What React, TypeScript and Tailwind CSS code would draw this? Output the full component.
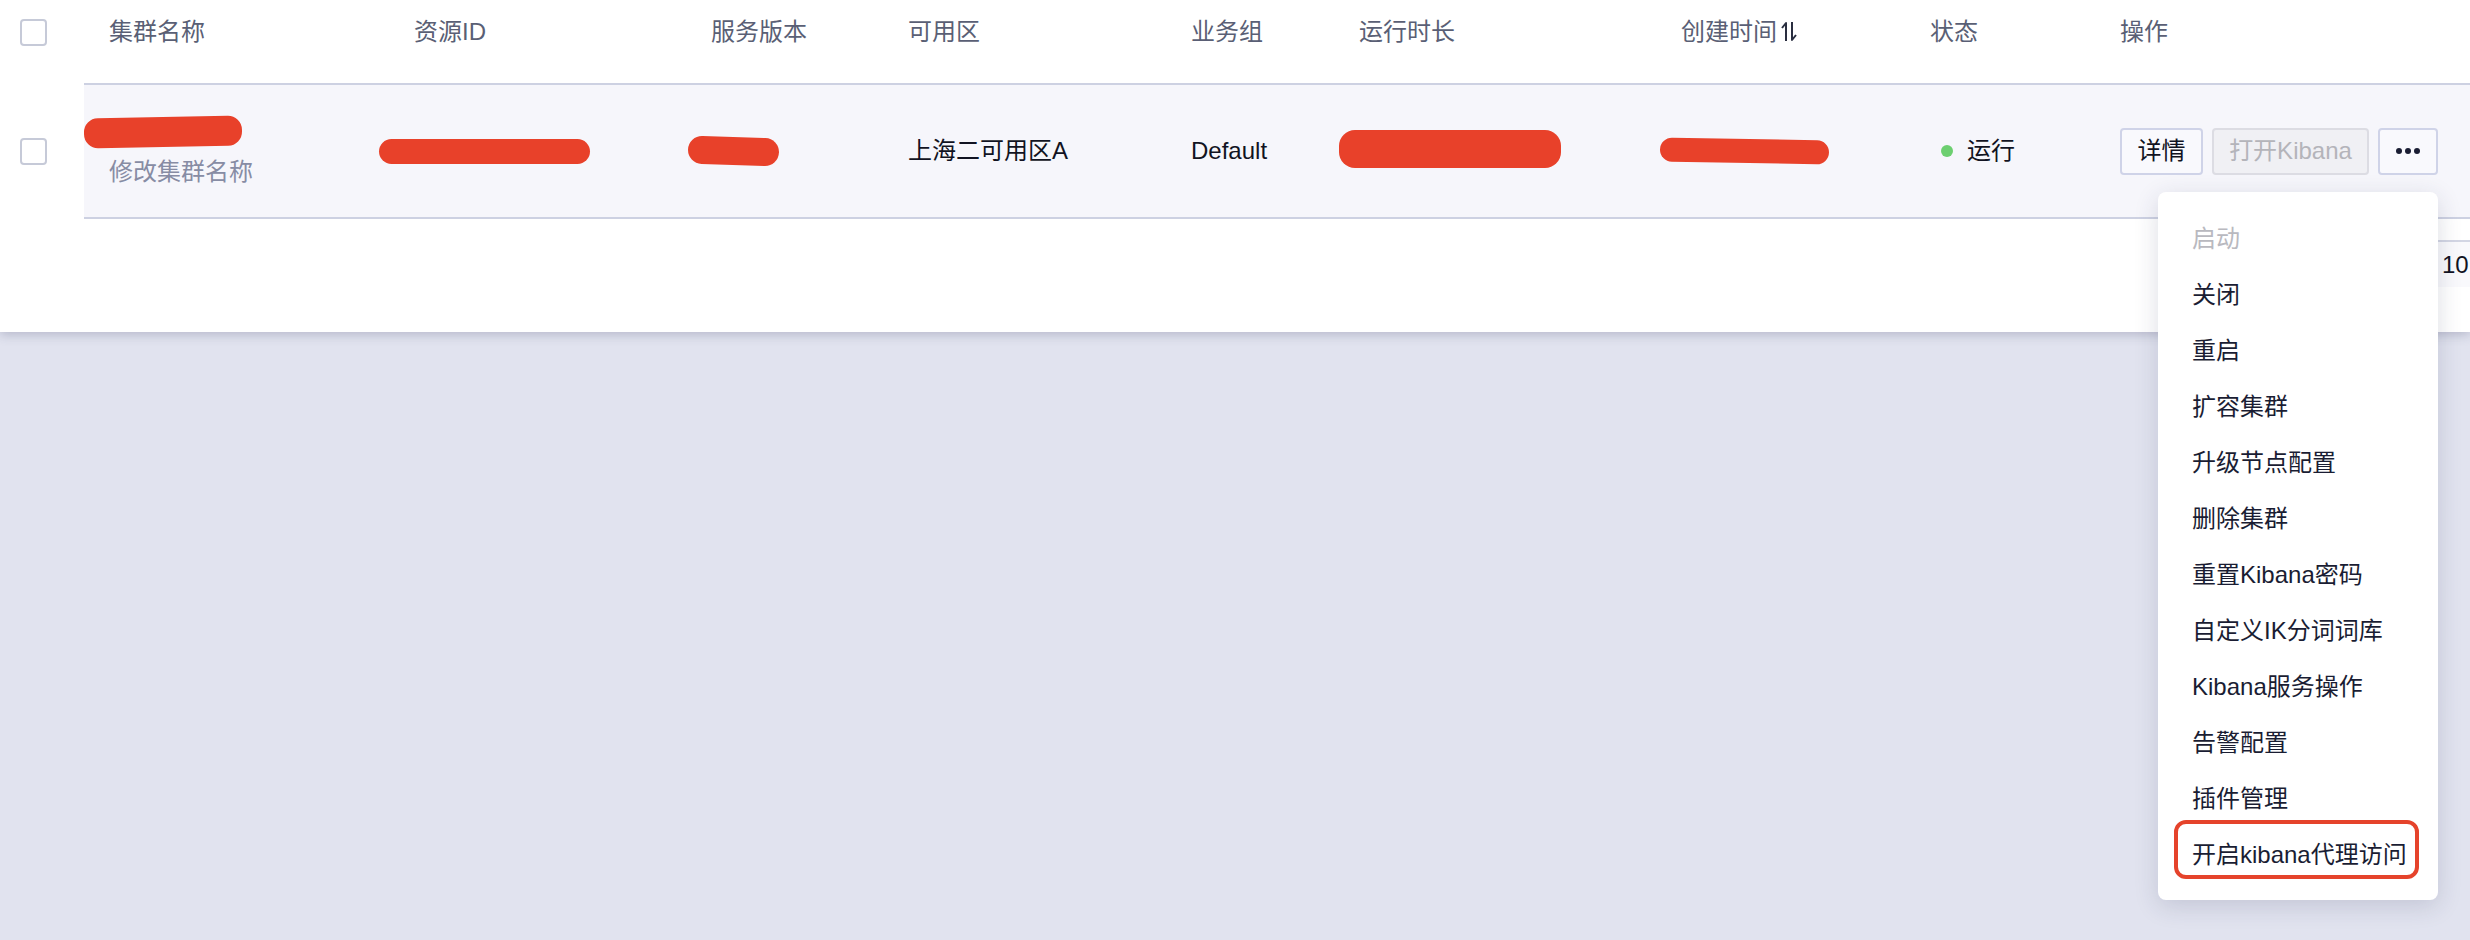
import React from "react";

const columns = [
  { title: "集群名称", width: "w-[305px]" },
  { title: "资源ID", width: "w-[297px]" },
  { title: "服务版本", width: "w-[197px]" },
  { title: "可用区", width: "w-[283px]" },
  { title: "业务组", width: "w-[168px]" },
  { title: "运行时长", width: "w-[322px]" },
  { title: "创建时间", width: "w-[249px]", sortable: true },
  { title: "状态", width: "w-[190px]" },
  { title: "操作", width: "flex-1" },
];

const menuItems = [
  "启动",
  "关闭",
  "重启",
  "扩容集群",
  "升级节点配置",
  "删除集群",
  "重置Kibana密码",
  "自定义IK分词词库",
  "Kibana服务操作",
  "告警配置",
  "插件管理",
  "开启kibana代理访问",
];

// redaction scribbles that cover private values in the screenshot
function Scribble({ className }: { className: string }) {
  return <div className={`bg-[#e8412a] ${className}`} />;
}

function Checkbox() {
  return (
    <div className="w-[27px] h-[27px] rounded-[4px] border-2 border-[#c6cad8] bg-white" />
  );
}

function SortIcon() {
  return (
    <svg width="16" height="21" viewBox="0 0 16 21" className="ml-[4px] mt-[6px]">
      <path
        d="M5 20V2L1 7M11 1V19L15 14"
        fill="none"
        stroke="#2a2e40"
        strokeWidth="2"
        strokeLinejoin="round"
      />
    </svg>
  );
}

function MoreMenu() {
  return (
    <div className="relative">
      <button className="w-[60px] h-[47px] rounded-[4px] border-2 border-[#cfd3e8] bg-[#f9f9fd] flex items-center justify-center gap-[3px]">
        <span className="w-[6px] h-[6px] rounded-full bg-[#1a1d33]" />
        <span className="w-[6px] h-[6px] rounded-full bg-[#1a1d33]" />
        <span className="w-[6px] h-[6px] rounded-full bg-[#1a1d33]" />
      </button>
      <div className="absolute right-0 top-[64px] w-[280px] pt-[19px] pb-[17px] bg-white rounded-[8px] shadow-[0_6px_24px_rgba(40,45,80,0.16)] z-10">
        {menuItems.map((item, i) => (
          <div
            key={item}
            className={`relative h-[56px] pl-[34px] flex items-center text-[24px] ${
              i === 0 ? "text-[#b9b9bf]" : "text-[#1a1d33]"
            }`}
          >
            {item}
            {i === menuItems.length - 1 && (
              <span className="absolute left-[16px] right-[19px] top-[-7px] bottom-[4px] border-4 border-[#e5432b] rounded-[12px]" />
            )}
          </div>
        ))}
      </div>
    </div>
  );
}

export default function App() {
  return (
    <div className="h-screen bg-[#e1e3ef] font-['Liberation_Sans','Noto_Sans_CJK_SC',sans-serif] overflow-hidden">
      <div className="bg-white h-[332px] shadow-[0_3px_10px_rgba(60,65,100,0.25)] relative z-10">
        {/* header */}
        <div className="flex h-[85px]">
          <div className="w-[84px] pl-[20px] pt-[19px] bg-white">
            <Checkbox />
          </div>
          <div className="flex-1 flex border-b-2 border-[#cdd1e2]">
            {columns.map((col) => (
              <div
                key={col.title}
                className={`${col.width} pl-[25px] pt-[15px] flex items-start text-[24px] leading-[34px] text-[#5a5f75]`}
              >
                {col.title}
                {col.sortable && <SortIcon />}
              </div>
            ))}
          </div>
        </div>

        {/* data row */}
        <div className="flex h-[134px]">
          <div className="w-[84px] pl-[20px] pt-[53px] bg-white">
            <Checkbox />
          </div>
          <div className="flex-1 flex items-center bg-[#f6f6fb] border-b-2 border-[#cdd1e2] text-[24px] text-[#111322]">
            <div className="w-[305px] pl-[25px] flex flex-col pt-[2px]">
              <Scribble className="ml-[-25px] w-[158px] h-[30px] rounded-[14px] -rotate-1" />
              <span className="mt-[10px] text-[#878ca4] leading-[30px]">修改集群名称</span>
            </div>
            <div className="w-[297px] pl-0">
              <Scribble className="ml-[-10px] w-[211px] h-[25px] rounded-full" />
            </div>
            <div className="w-[197px] pl-[2px]">
              <Scribble className="w-[91px] h-[28px] rounded-[14px] rotate-2" />
            </div>
            <div className="w-[283px] pl-[25px]">上海二可用区A</div>
            <div className="w-[168px] pl-[25px]">Default</div>
            <div className="w-[322px] pl-[5px]">
              <Scribble className="w-[222px] h-[38px] rounded-[16px] mt-[-4px]" />
            </div>
            <div className="w-[249px] pl-[4px]">
              <Scribble className="w-[169px] h-[24px] rounded-full rotate-1" />
            </div>
            <div className="w-[190px] pl-[36px] flex items-center">
              <span className="w-[12px] h-[12px] rounded-full bg-[#6ccf70]" />
              <span className="ml-[14px]">运行</span>
            </div>
            <div className="flex-1 pl-[25px] flex items-center gap-[9px]">
              <button className="w-[83px] h-[47px] rounded-[4px] border-2 border-[#cfd3e8] bg-[#f9f9fd] text-[24px] text-[#111322]">
                详情
              </button>
              <button className="w-[157px] h-[47px] rounded-[4px] border-2 border-[#dcdce3] bg-[#f0f0f4] text-[24px] text-[#b4b4ba]">
                打开Kibana
              </button>
              <MoreMenu />
            </div>
          </div>
        </div>

        {/* pagination, mostly hidden under the menu */}
        <div className="flex justify-end mt-[21px] overflow-hidden">
          <div className="w-[80px] h-[47px] mr-[-48px] border-t-2 border-[#d3d6e4] bg-[#f9f9fc] shadow-[0_2px_2px_rgba(90,100,160,0.35)] pl-[4px] flex items-center text-[24px] text-[#111322]">
            10
          </div>
        </div>
      </div>
    </div>
  );
}
